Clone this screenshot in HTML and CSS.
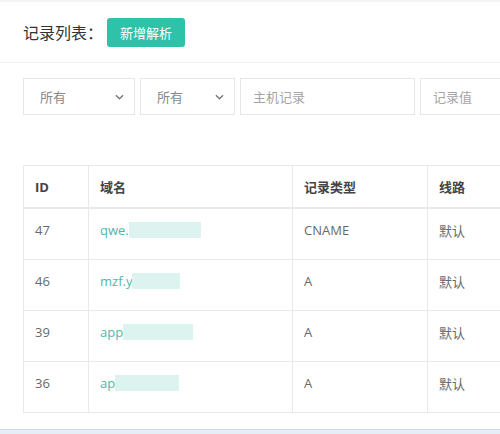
FILE: index.html
```html
<!DOCTYPE html>
<html lang="zh-CN">
<head>
  <meta charset="UTF-8" />
  <title>记录列表</title>
  <link rel="stylesheet" href="styles.css">
</head>
<body>
  <div class="panel">
    <div class="panel-title">
      <h5>记录列表：</h5>
      <button class="btn-add">新增解析</button>
    </div>

    <div class="panel-body">
      <div class="filters">
        <div class="select w1"><span>所有</span><svg width="9" height="6" viewBox="0 0 10 6"><path d="M1 1l4 4 4-4" fill="none" stroke="#777" stroke-width="1.5"/></svg></div>
        <div class="select w2"><span>所有</span><svg width="9" height="6" viewBox="0 0 10 6"><path d="M1 1l4 4 4-4" fill="none" stroke="#777" stroke-width="1.5"/></svg></div>
        <input class="field w3" type="text" placeholder="主机记录">
        <input class="field w4" type="text" placeholder="记录值">
      </div>

      <table class="records">
        <thead>
          <tr>
            <th class="c-id">ID</th>
            <th class="c-domain">域名</th>
            <th class="c-type">记录类型</th>
            <th class="c-line">线路</th>
          </tr>
        </thead>
        <tbody>
          <tr>
            <td>47</td>
            <td><a href="#">qwe.<span class="blur" style="width:72px"></span></a></td>
            <td>CNAME</td>
            <td>默认</td>
          </tr>
          <tr>
            <td>46</td>
            <td><a href="#">mzf.y<span class="blur" style="width:48px"></span></a></td>
            <td>A</td>
            <td>默认</td>
          </tr>
          <tr>
            <td>39</td>
            <td><a href="#">app<span class="blur" style="width:70px"></span></a></td>
            <td>A</td>
            <td>默认</td>
          </tr>
          <tr>
            <td>36</td>
            <td><a href="#">ap<span class="blur" style="width:64px"></span></a></td>
            <td>A</td>
            <td>默认</td>
          </tr>
        </tbody>
      </table>
    </div>
  </div>
</body>
</html>
```

FILE: styles.css
```css
body {
  margin: 0;
  background-color: #e6edf5;
  font-family: "Open Sans", "Noto Sans CJK SC", sans-serif;
  font-size: 13px;
  color: #676a6c;
  overflow: hidden;
  width: 500px;
  height: 434px;
}

.panel {
  background-color: #fff;
  border-top: 2px solid #f3f4f6;
  border-bottom: 1px solid #cddbea;
  width: 500px;
  overflow: hidden;
}

.panel-title {
  display: flex;
  align-items: center;
  gap: 4px;
  height: 60px;
  padding: 0 23px;
  border-bottom: 1px solid #eef0f2;
}

.panel-title h5 {
  margin: 0;
  font-size: 16px;
  font-weight: normal;
  color: #333;
}

.btn-add {
  background-color: #2ec3a8;
  border: none;
  border-radius: 3px;
  color: #fff;
  font-family: inherit;
  font-size: 13px;
  height: 29px;
  width: 78px;
  padding: 0;
}

.panel-body {
  padding: 15px 23px 16px;
  width: 640px;
}

.filters {
  display: flex;
  gap: 5px;
  height: 37px;
}

.select,
.field {
  box-sizing: border-box;
  height: 37px;
  border: 1px solid #e5e6e7;
  background: #fff;
  font-family: inherit;
  font-size: 13px;
}

.select {
  display: flex;
  align-items: center;
  justify-content: space-between;
  padding: 0 10px 0 16px;
  color: #888;
}

.field {
  padding: 0 12px;
  outline: none;
}

.field::placeholder {
  color: #a5a5a5;
}

.w1 { width: 112px; }
.w2 { width: 95px; }
.w3 { width: 175px; }
.w4 { width: 175px; }

.records {
  margin-top: 50px;
  border-collapse: collapse;
  width: 600px;
}

.records th,
.records td {
  border: 1px solid #e7eaec;
  text-align: left;
  padding: 0 11px;
}

.records th {
  height: 41px;
  font-weight: bold;
  color: #444;
  border-bottom: 2px solid #e7eaec;
}

.records td {
  vertical-align: top;
  padding-top: 12px;
  box-sizing: border-box;
  height: 51px;
}

.c-id { width: 42px; }
.c-domain { width: 181px; }
.c-type { width: 112px; }

.records a {
  color: #4fb8a5;
  text-decoration: none;
  display: inline-flex;
  align-items: center;
}

.blur {
  display: inline-block;
  height: 16px;
  background-color: #dcf3ef;
}
```
